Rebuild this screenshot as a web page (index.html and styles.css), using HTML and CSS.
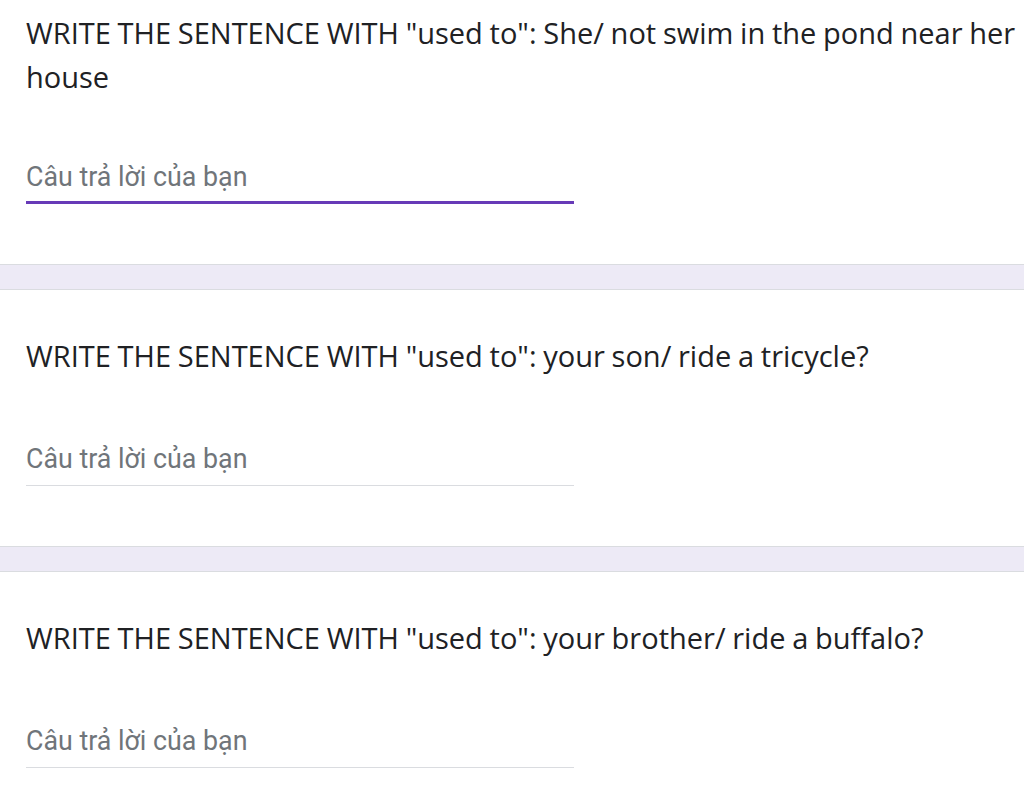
FILE: index.html
```html
<!DOCTYPE html>
<html lang="vi">
<head>
<meta charset="utf-8">
<title>Form</title>
<link rel="stylesheet" href="styles.css">
</head>
<body>
<div class="list">
  <section class="card card--first">
    <div class="question">WRITE THE SENTENCE WITH "used to": She/ not swim in the pond near her house</div>
    <div class="answer answer--focused"><span class="placeholder">Câu trả lời của bạn</span></div>
  </section>
  <section class="card">
    <div class="question">WRITE THE SENTENCE WITH "used to": your son/ ride a tricycle?</div>
    <div class="answer"><span class="placeholder">Câu trả lời của bạn</span></div>
  </section>
  <section class="card">
    <div class="question">WRITE THE SENTENCE WITH "used to": your brother/ ride a buffalo?</div>
    <div class="answer"><span class="placeholder">Câu trả lời của bạn</span></div>
  </section>
</div>
</body>
</html>
```

FILE: styles.css
```css
html, body {
  margin: 0;
  padding: 0;
  background: #edeaf6;
  overflow: hidden;
}
.list {
  display: flex;
  flex-direction: column;
  gap: 24px;
  margin-top: -34px;
}
.card {
  background: #ffffff;
  border-top: 1px solid #dadce0;
  border-bottom: 1px solid #dadce0;
  padding: 44px 0 60px 26px;
}
.question {
  font-family: "Open Sans", sans-serif;
  font-size: 29px;
  line-height: 44px;
  word-spacing: -0.8px;
  color: #202124;
}
.answer {
  width: 548px;
  margin-top: 63px;
  padding-bottom: 8px;
  border-bottom: 1px solid #dadce0;
}
.answer--focused {
  margin-top: 60px;
  border-bottom: 3px solid #673ab7;
  padding-bottom: 6px;
}
.placeholder {
  display: block;
  font-family: Roboto, sans-serif;
  font-size: 26.8px;
  line-height: 36px;
  color: #70757a;
}
```
